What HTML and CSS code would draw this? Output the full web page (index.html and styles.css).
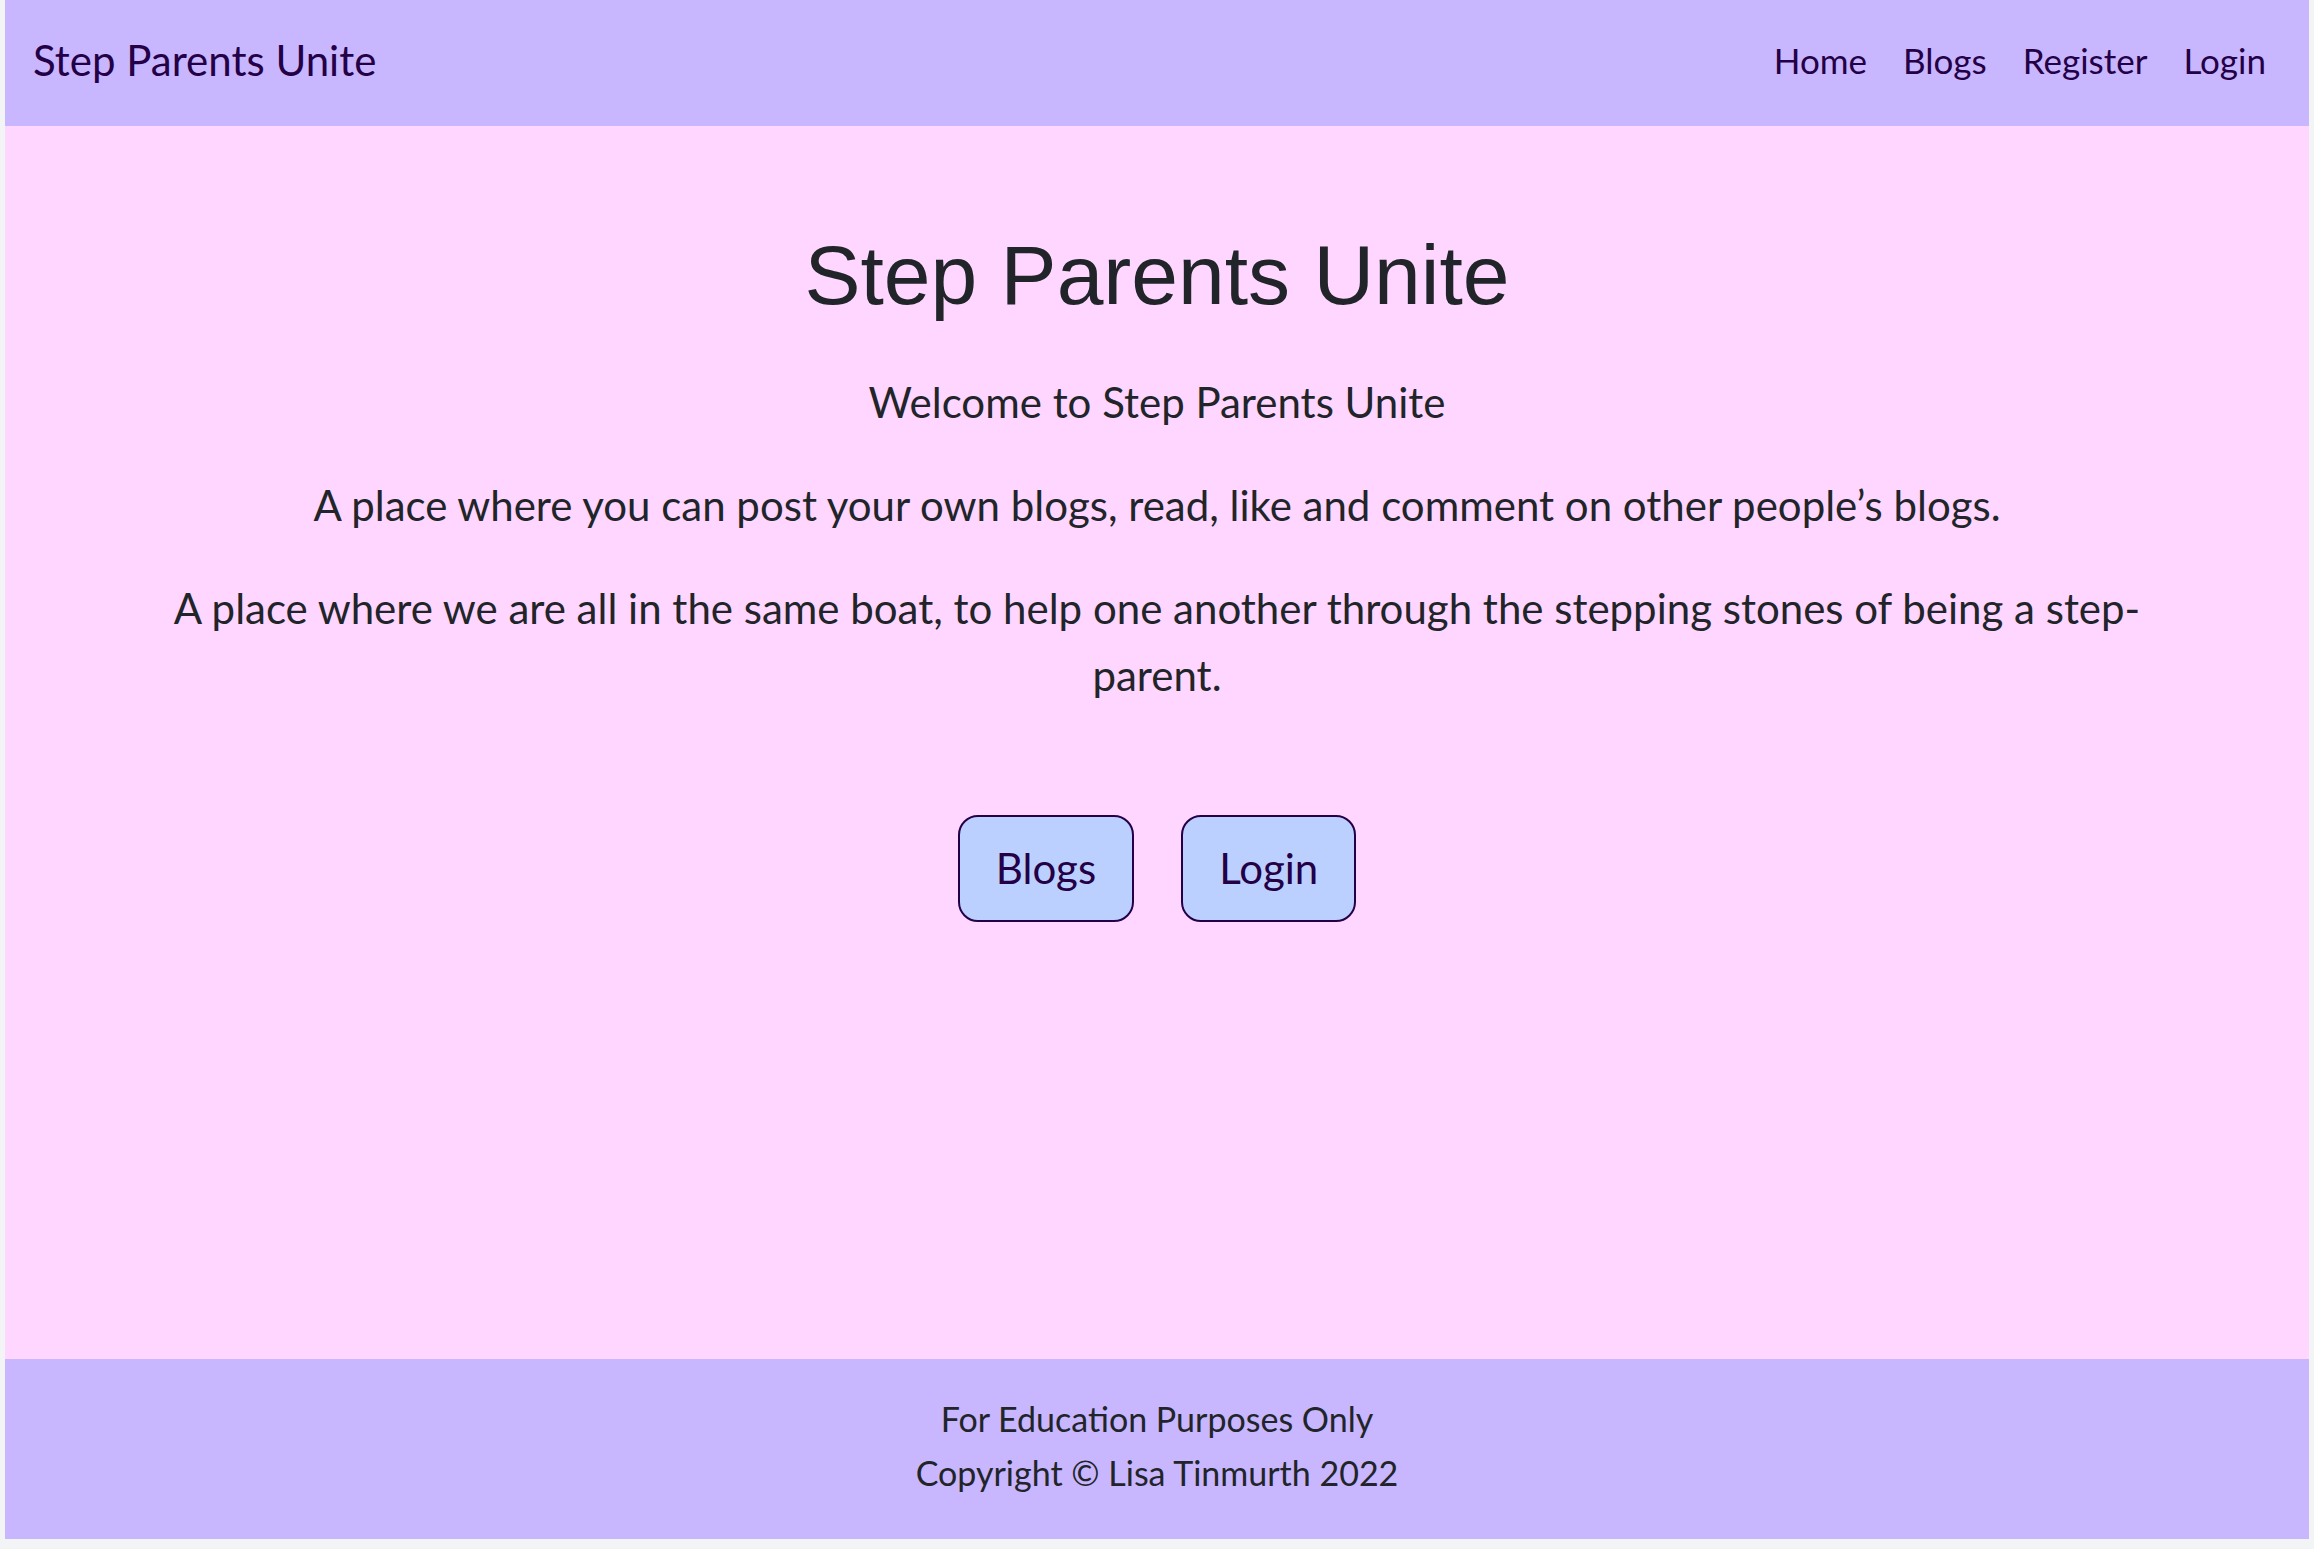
FILE: index.html
```html
<!DOCTYPE html>
<html lang="en">
<head>
<meta charset="utf-8">
<title>Step Parents Unite</title>
<link rel="stylesheet" href="styles.css">
</head>
<body>
<div class="page">
  <header class="navbar">
    <a class="brand" href="#">Step Parents Unite</a>
    <nav class="nav">
      <a href="#">Home</a>
      <a href="#">Blogs</a>
      <a href="#">Register</a>
      <a href="#">Login</a>
    </nav>
  </header>
  <main class="hero">
    <h1 class="hero-title">Step Parents Unite</h1>
    <p>Welcome to Step Parents Unite</p>
    <p>A place where you can post your own blogs, read, like and comment on other people’s blogs.</p>
    <p>A place where we are all in the same boat, to help one another through the stepping stones of being a step-parent.</p>
    <div class="actions">
      <a class="btn" href="#">Blogs</a>
      <a class="btn" href="#">Login</a>
    </div>
  </main>
  <footer class="footer">
    <p>For Education Purposes Only</p>
    <p>Copyright © Lisa Tinmurth 2022</p>
  </footer>
</div>
</body>
</html>
```
FILE: styles.css
```css
* { box-sizing: border-box; }
html, body { margin: 0; }
body {
  background: #f3f4f6;
  padding: 0 5px 10px 5px;
  font-family: Lato, "Noto Sans", sans-serif;
  color: #212529;
}
.page {
  height: 1539px;
  display: flex;
  flex-direction: column;
}
.navbar {
  height: 126px;
  flex: 0 0 126px;
  background: #c8b6ff;
  display: flex;
  align-items: center;
  justify-content: space-between;
  padding: 0 25px 7px 28px;
}
.brand {
  font-size: 42px;
  color: #240046;
  text-decoration: none;
}
.nav { display: flex; }
.nav a {
  font-size: 35px;
  color: #240046;
  text-decoration: none;
  padding: 0 18px;
}
.hero {
  flex: 1;
  background: #ffd6ff;
  text-align: center;
  padding: 98px 130px 0;
}
.hero-title {
  font-family: "Liberation Sans", Arial, sans-serif;
  font-weight: 400;
  font-size: 84px;
  line-height: 102px;
  margin: 0 0 43px;
  color: #212529;
}
.hero p {
  font-size: 42px;
  line-height: 67px;
  margin: 0 0 36px;
}
.actions {
  padding-top: 70px;
  display: flex;
  justify-content: center;
  gap: 47px;
}
.btn {
  display: inline-block;
  background: #bbd0ff;
  border: 2px solid #240046;
  border-radius: 20px;
  padding: 18px 36px;
  font-size: 42px;
  line-height: 67px;
  color: #240046;
  text-decoration: none;
}
.footer {
  flex: 0 0 180px;
  background: #c8b6ff;
  text-align: center;
  padding: 33px 0;
  font-size: 34px;
  line-height: 54px;
}
.footer p { margin: 0; }
```
